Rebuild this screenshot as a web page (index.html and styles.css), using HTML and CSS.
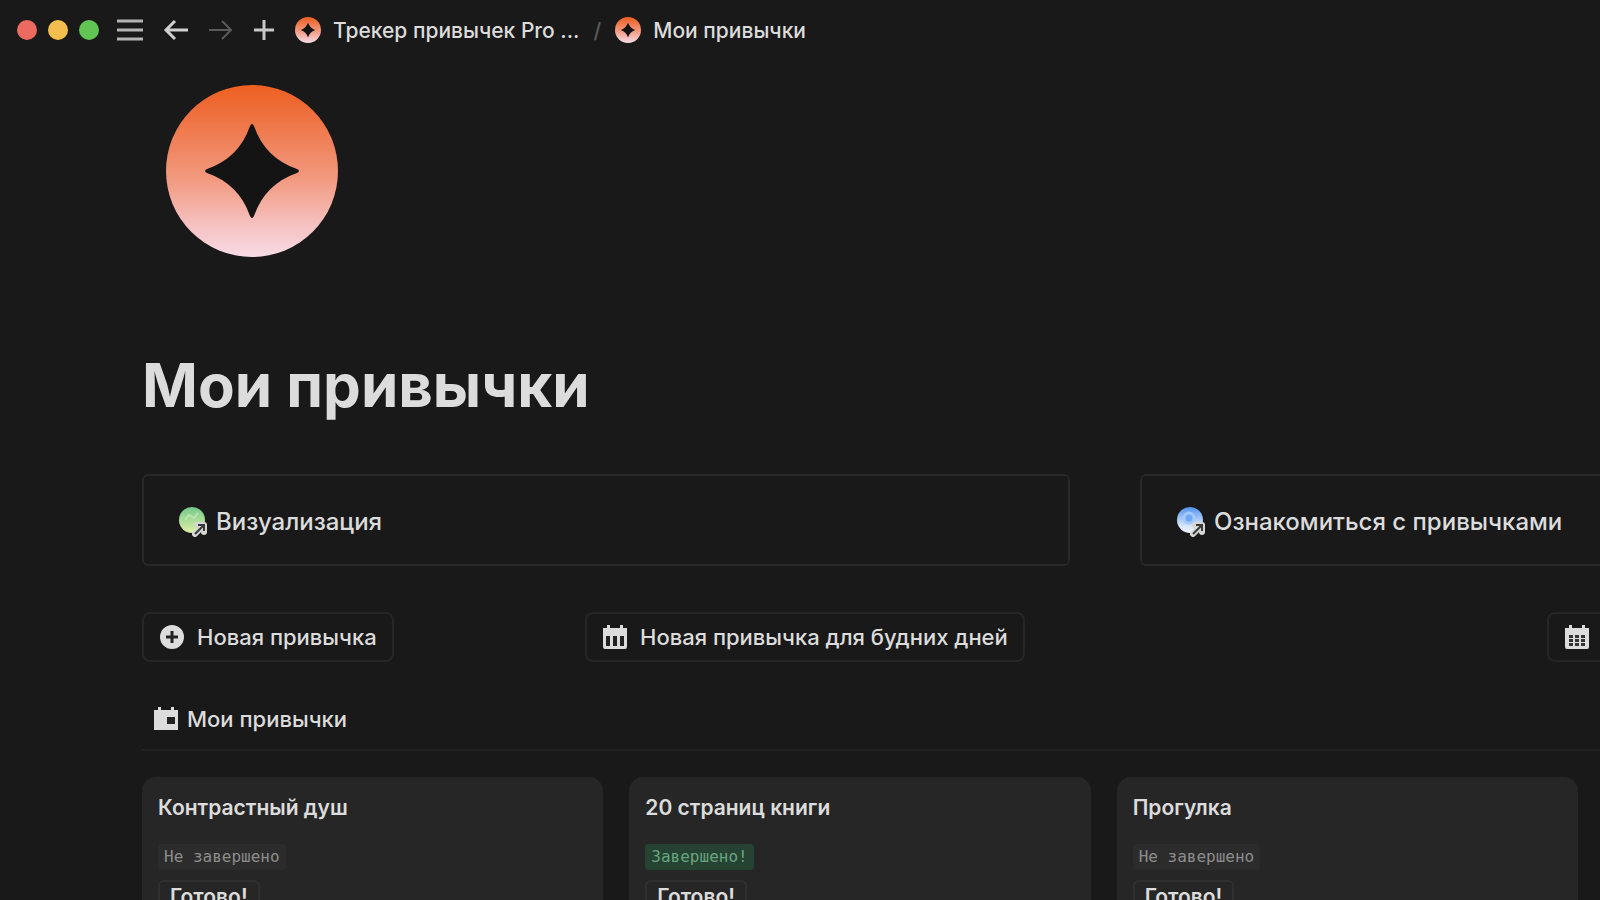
FILE: index.html
```html
<!DOCTYPE html>
<html lang="ru">
<head>
    <meta charset="UTF-8">
    <meta name="viewport" content="width=device-width, initial-scale=1.0">
    <title>Мои привычки</title>
    <link rel="stylesheet" href="styles.css">
</head>
<body>
<!-- Shared shapes -->
<svg class="defs" width="0" height="0" aria-hidden="true">
    <defs>
        <linearGradient id="sunset" x1="0" y1="0" x2="0" y2="1">
            <stop offset="0" stop-color="#ee6022"/>
            <stop offset="0.12" stop-color="#ee6a35"/>
            <stop offset="0.55" stop-color="#f29a80"/>
            <stop offset="0.8" stop-color="#f5bfbd"/>
            <stop offset="1" stop-color="#f8dbe6"/>
        </linearGradient>
        <linearGradient id="green" x1="0" y1="0" x2="0" y2="1">
            <stop offset="0" stop-color="#72c98c"/>
            <stop offset="1" stop-color="#e2efa6"/>
        </linearGradient>
        <linearGradient id="blue" x1="0" y1="0" x2="0" y2="1">
            <stop offset="0" stop-color="#4f93ee"/>
            <stop offset="0.7" stop-color="#d4e4fb"/>
            <stop offset="1" stop-color="#eef4fd"/>
        </linearGradient>
        <symbol id="star" viewBox="0 0 172 172">
            <circle cx="86" cy="86" r="86" fill="url(#sunset)"/>
            <path d="M84 41Q86 37 88 41Q99 73 131 84Q135 86 131 88Q99 99 88 131Q86 135 84 131Q73 99 41 88Q37 86 41 84Q73 73 84 41Z" fill="#141414"/>
        </symbol>
        <symbol id="link-arrow" viewBox="0 0 16 16">
            <path d="M3 13 L11 5 M5 4 H12 V11" fill="none" stroke="#d6d6d2" stroke-width="6" stroke-linejoin="round" stroke-linecap="round"/>
            <path d="M3 13 L11 5 M6 4 H12 V10" fill="none" stroke="#3a3a3a" stroke-width="2"/>
        </symbol>
    </defs>
</svg>

<header class="topbar">
    <div class="lights">
        <span class="light red"></span>
        <span class="light yellow"></span>
        <span class="light green"></span>
    </div>
    <nav class="tools">
        <button class="tool" aria-label="Меню">
            <svg width="26" height="26" viewBox="0 0 26 26"><path d="M0 4H26M0 13H26M0 22H26" stroke="#b4b4b4" stroke-width="3"/></svg>
        </button>
        <button class="tool" aria-label="Назад">
            <svg width="26" height="26" viewBox="0 0 26 26"><path d="M26 13H5M13 4L4 13L13 22" fill="none" stroke="#d0d0d0" stroke-width="3"/></svg>
        </button>
        <button class="tool" aria-label="Вперёд">
            <svg width="26" height="26" viewBox="0 0 26 26"><path d="M2 13H23M15 4L24 13L15 22" fill="none" stroke="#5a5a5a" stroke-width="2"/></svg>
        </button>
        <button class="tool" aria-label="Новая страница">
            <svg width="26" height="26" viewBox="0 0 26 26"><path d="M2 13H22M12 3V23" stroke="#c8c8c8" stroke-width="3"/></svg>
        </button>
    </nav>
    <nav class="crumbs">
        <a href="#"><svg width="26" height="26"><use href="#star"/></svg>Трекер привычек Pro ...</a>
        <span class="slash">/</span>
        <a href="#"><svg width="26" height="26"><use href="#star"/></svg>Мои привычки</a>
    </nav>
</header>

<main class="page">
    <svg class="page-icon" width="172" height="172"><use href="#star"/></svg>
    <h1>Мои привычки</h1>

    <div class="links">
        <a class="link-card" href="#">
            <svg width="32" height="32" viewBox="0 0 32 32">
                <circle cx="14" cy="14" r="13" fill="url(#green)"/>
                <path d="M7 14L11 9L16 12L20 7" fill="none" stroke="#b9e8b4" stroke-width="2"/>
                <use href="#link-arrow" x="14" y="15" width="16" height="16"/>
            </svg>
            Визуализация
        </a>
        <a class="link-card" href="#">
            <svg width="32" height="32" viewBox="0 0 32 32">
                <circle cx="14" cy="14" r="13" fill="url(#blue)"/>
                <circle cx="13" cy="12" r="5" fill="#6fa8f5" stroke="#a5c8fa" stroke-width="3"/>
                <use href="#link-arrow" x="14" y="15" width="16" height="16"/>
            </svg>
            Ознакомиться с привычками
        </a>
    </div>

    <div class="actions">
        <button class="action">
            <svg width="26" height="26" viewBox="0 0 26 26"><circle cx="13" cy="13" r="12" fill="#dcdcdc"/><path d="M7 13H19M13 7V19" stroke="#222" stroke-width="3"/></svg>
            Новая привычка
        </button>
        <button class="action">
            <svg width="26" height="26" viewBox="0 0 26 26">
                <path d="M1 4H5V1H8V4H18V1H21V4H25V23Q25 25 23 25H3Q1 25 1 23Z" fill="#dcdcdc"/>
                <path d="M4 12H8V22H4ZM11 12H15V22H11ZM18 12H22V22H18Z" fill="#222"/>
            </svg>
            Новая привычка для будних дней
        </button>
        <button class="action" aria-label="Календарь">
            <svg width="26" height="26" viewBox="0 0 26 26">
                <path d="M1 4H5V1H8V4H18V1H21V4H25V23Q25 25 23 25H3Q1 25 1 23Z" fill="#dcdcdc"/>
                <path d="M5 11H9V14H5ZM11 11H15V14H11ZM17 11H21V14H17ZM5 15H9V18H5ZM11 15H15V18H11ZM17 15H21V18H17ZM5 19H9V22H5ZM11 19H15V22H11ZM17 19H21V22H17Z" fill="#333"/>
            </svg>
        </button>
    </div>

    <h2 class="board-title">
        <svg width="26" height="26" viewBox="0 0 26 26">
            <path d="M1 4H5V1H8V4H18V1H21V4H25V24H1Z" fill="#dcdcdc"/>
            <rect x="14" y="11" width="8" height="7" fill="#222"/>
        </svg>
        Мои привычки
    </h2>

    <div class="board">
        <article class="habit">
            <h3>Контрастный душ</h3>
            <span class="status">Не завершено</span>
            <button class="done">Готово!</button>
        </article>
        <article class="habit">
            <h3>20 страниц книги</h3>
            <span class="status complete">Завершено!</span>
            <button class="done">Готово!</button>
        </article>
        <article class="habit">
            <h3>Прогулка</h3>
            <span class="status">Не завершено</span>
            <button class="done">Готово!</button>
        </article>
    </div>
</main>
</body>
</html>
```
FILE: styles.css
```css
* {
    box-sizing: border-box;
}
body {
    margin: 0;
    height: 100vh;
    overflow: hidden;
    background-color: #191919;
    color: #dcdcdc;
    font-family: Inter, "Noto Sans", sans-serif;
    font-size: 22px;
    font-weight: 500;
}
a {
    color: inherit;
    text-decoration: none;
}
button {
    font: inherit;
    color: inherit;
    background: none;
    border: none;
    padding: 0;
    cursor: pointer;
}
svg {
    display: block;
    flex-shrink: 0;
}
.defs {
    position: absolute;
}

/* Window bar */
.topbar {
    display: flex;
    align-items: center;
    height: 60px;
    padding-left: 17px;
    white-space: nowrap;
}
.lights {
    display: flex;
    gap: 11px;
}
.light {
    width: 20px;
    height: 20px;
    border-radius: 50%;
}
.red {
    background-color: #ec6a5f;
}
.yellow {
    background-color: #f4be4f;
}
.green {
    background-color: #61c554;
}
.tools {
    display: flex;
    gap: 19px;
    margin-left: 18px;
}
.crumbs {
    display: flex;
    align-items: center;
    gap: 14px;
    margin-left: 17px;
    font-size: 21px;
}
.crumbs a {
    display: flex;
    align-items: center;
    gap: 12px;
}
.slash {
    color: #5a5a5a;
}

/* Page */
.page {
    padding: 25px 0 0 142px;
}
.page-icon {
    margin-left: 24px;
}
h1 {
    margin: 91px 0 0;
    font-size: 60px;
    line-height: 74px;
    font-weight: 700;
}
.links {
    display: grid;
    grid-template-columns: 58vw 58vw;
    gap: 70px;
    margin-top: 52px;
}
.link-card {
    display: flex;
    align-items: center;
    gap: 6px;
    height: 92px;
    padding: 3px 34px 0;
    border: 2px solid #282828;
    border-radius: 6px;
    font-size: 24px;
}
.actions {
    display: grid;
    grid-template-columns: minmax(0, 373fr) minmax(0, 892fr) minmax(0, 53fr);
    gap: 70px;
    margin-top: 46px;
}
.action {
    display: flex;
    align-items: center;
    gap: 12px;
    width: max-content;
    height: 50px;
    padding: 0 15px;
    border: 2px solid #262626;
    border-radius: 8px;
}
.board-title {
    display: flex;
    align-items: center;
    gap: 8px;
    height: 62px;
    margin: 27px 0 0;
    padding-left: 11px;
    border-bottom: 2px solid #222;
    font-size: 22px;
    font-weight: 500;
}

/* Habit cards */
.board {
    display: grid;
    grid-template-columns: repeat(3, 1fr);
    gap: 26px;
    margin-top: 26px;
    padding-right: 22px;
}
.habit {
    display: flex;
    flex-direction: column;
    align-items: flex-start;
    height: 200px;
    padding: 16px;
    border-radius: 14px;
    background-color: #262626;
}
.habit h3 {
    margin: 0 0 21px;
    font-size: 21px;
    line-height: 30px;
    font-weight: 600;
}
.status {
    padding: 0 6px;
    border-radius: 4px;
    background-color: #2c2c2c;
    color: #8c8c8c;
    font-family: "DejaVu Sans Mono", monospace;
    font-size: 16px;
    line-height: 26px;
    font-weight: 400;
}
.complete {
    background-color: #254232;
    color: #68a57f;
}
.done {
    height: 34px;
    margin-top: 10px;
    padding: 0 10px;
    border: 2px solid #303030;
    border-radius: 6px;
    font-size: 21px;
    line-height: 28px;
    font-weight: 600;
}
```
